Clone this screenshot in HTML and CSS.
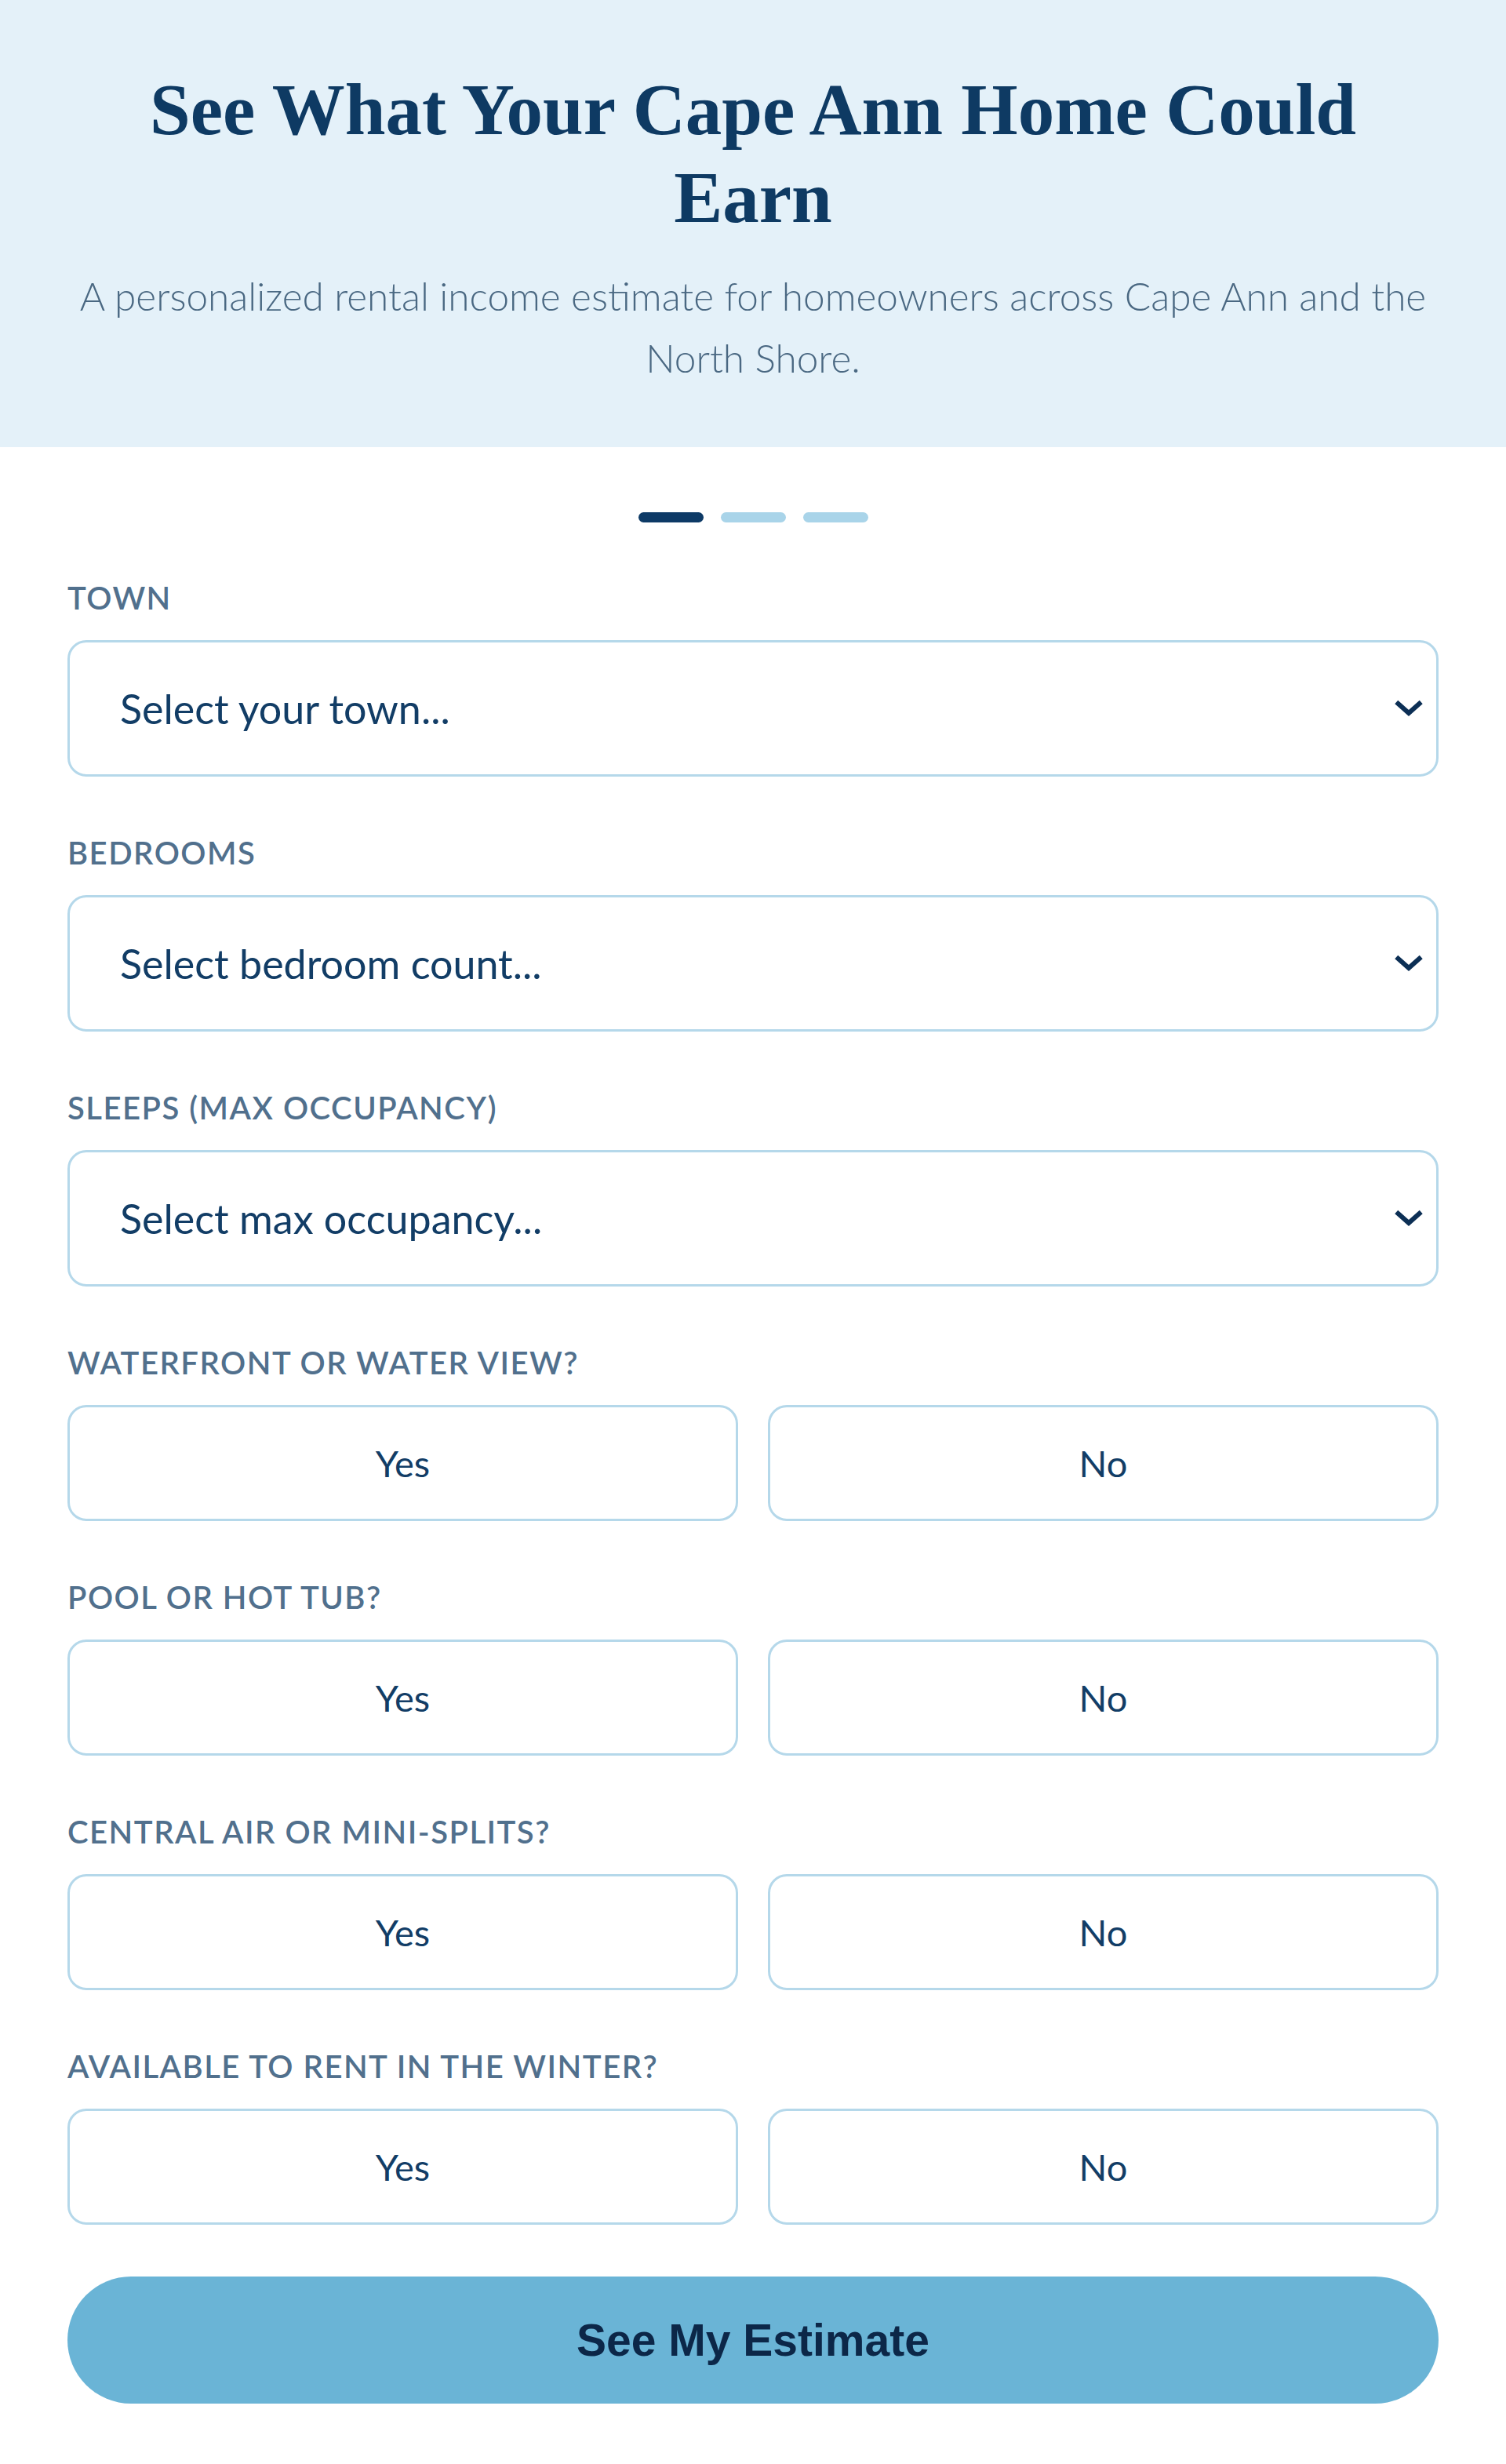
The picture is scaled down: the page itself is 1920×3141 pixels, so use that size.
FILE: index.html
```html
<!DOCTYPE html>
<html lang="en">
<head>
    <meta charset="UTF-8">
    <title>Rental Income Estimate</title>
    <link rel="stylesheet" href="styles.css">
</head>
<body>
    <header class="hero">
        <h1 class="hero-title">See What Your Cape Ann Home Could Earn</h1>
        <p class="hero-sub">A personalized rental income estimate for homeowners across Cape Ann and the North Shore.</p>
    </header>

    <main class="estimate-form">
        <div class="steps">
            <span class="step active"></span>
            <span class="step"></span>
            <span class="step"></span>
        </div>

        <div class="field">
            <label class="field-label" for="town">Town</label>
            <div class="select-wrap">
                <select id="town" class="select">
                    <option>Select your town...</option>
                </select>
                <svg class="chevron" viewBox="0 0 24 16" width="36" height="24"><path d="M3 4l9 8 9-8" fill="none" stroke="#0c2f55" stroke-width="4" stroke-linecap="square"/></svg>
            </div>
        </div>

        <div class="field">
            <label class="field-label" for="bedrooms">Bedrooms</label>
            <div class="select-wrap">
                <select id="bedrooms" class="select">
                    <option>Select bedroom count...</option>
                </select>
                <svg class="chevron" viewBox="0 0 24 16" width="36" height="24"><path d="M3 4l9 8 9-8" fill="none" stroke="#0c2f55" stroke-width="4" stroke-linecap="square"/></svg>
            </div>
        </div>

        <div class="field">
            <label class="field-label" for="sleeps">Sleeps (Max Occupancy)</label>
            <div class="select-wrap">
                <select id="sleeps" class="select">
                    <option>Select max occupancy...</option>
                </select>
                <svg class="chevron" viewBox="0 0 24 16" width="36" height="24"><path d="M3 4l9 8 9-8" fill="none" stroke="#0c2f55" stroke-width="4" stroke-linecap="square"/></svg>
            </div>
        </div>

        <div class="field">
            <span class="field-label">Waterfront or water view?</span>
            <div class="choices">
                <button class="choice">Yes</button>
                <button class="choice">No</button>
            </div>
        </div>

        <div class="field">
            <span class="field-label">Pool or hot tub?</span>
            <div class="choices">
                <button class="choice">Yes</button>
                <button class="choice">No</button>
            </div>
        </div>

        <div class="field">
            <span class="field-label">Central air or mini-splits?</span>
            <div class="choices">
                <button class="choice">Yes</button>
                <button class="choice">No</button>
            </div>
        </div>

        <div class="field">
            <span class="field-label">Available to rent in the winter?</span>
            <div class="choices">
                <button class="choice">Yes</button>
                <button class="choice">No</button>
            </div>
        </div>

        <button class="submit">See My Estimate</button>
    </main>
</body>
</html>
```

FILE: styles.css
```css
body {
    margin: 0;
    background-color: #ffffff;
    font-family: Lato, "Open Sans", sans-serif;
    color: #123d66;
}
.hero {
    background-color: #e4f1f9;
    padding: 84px 60px 74px;
    text-align: center;
}
.hero-title {
    max-width: 1640px;
    margin: 0 auto;
    font-family: "Liberation Serif", serif;
    font-weight: bold;
    font-size: 93px;
    line-height: 112px;
    color: #0e3a63;
}
.hero-sub {
    margin: 30px 0 0;
    font-weight: 300;
    font-size: 49.5px;
    line-height: 79px;
    color: #4a6882;
}
.estimate-form {
    padding: 83px 86px 77px;
}
.steps {
    display: flex;
    justify-content: center;
    gap: 22px;
    margin-bottom: 74px;
}
.step {
    width: 83px;
    height: 13px;
    border-radius: 7px;
    background-color: #a9d4e9;
}
.step.active {
    background-color: #0d3a66;
}
.field {
    margin-bottom: 75px;
}
.field-label {
    display: block;
    margin-bottom: 32px;
    font-size: 40px;
    line-height: 44px;
    font-weight: 600;
    letter-spacing: 1.5px;
    text-transform: uppercase;
    color: #51708d;
}
.select-wrap {
    position: relative;
}
.select {
    display: block;
    width: 100%;
    height: 174px;
    padding: 0 64px;
    appearance: none;
    -webkit-appearance: none;
    background-color: #ffffff;
    border: 3px solid #b5d8ea;
    border-radius: 24px;
    font-family: Lato, "Open Sans", sans-serif;
    font-size: 52px;
    color: #123d66;
}
.chevron {
    position: absolute;
    right: 20px;
    top: 50%;
    margin-top: -12px;
}
.choices {
    display: grid;
    grid-template-columns: 1fr 1fr;
    gap: 38px;
}
.choice {
    height: 148px;
    background-color: #ffffff;
    border: 3px solid #b5d8ea;
    border-radius: 24px;
    font-family: Lato, "Open Sans", sans-serif;
    font-size: 47px;
    color: #123d66;
    cursor: pointer;
}
.submit {
    display: block;
    width: 100%;
    height: 162px;
    margin-top: -9px;
    background-color: #6ab4d6;
    border: none;
    border-radius: 81px;
    font-family: "Liberation Sans", Arial, sans-serif;
    font-weight: bold;
    font-size: 57px;
    color: #0c2748;
    cursor: pointer;
}
```
